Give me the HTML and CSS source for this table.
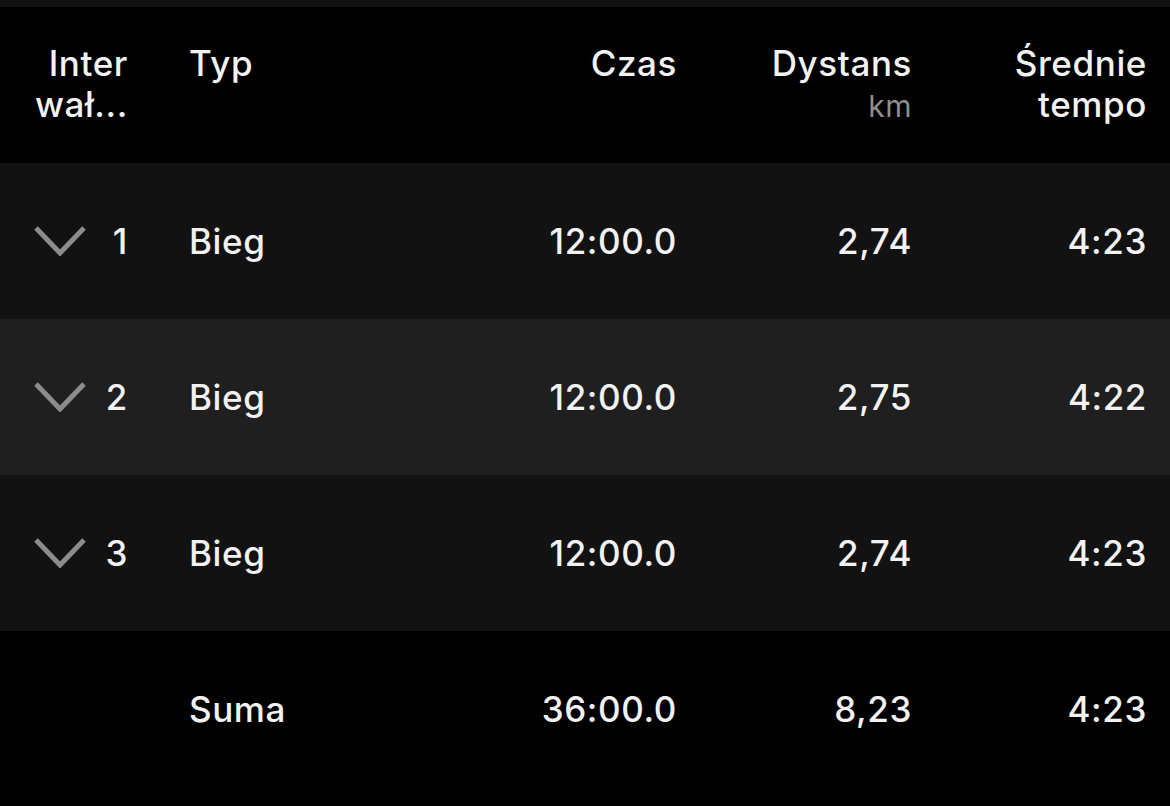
FILE: index.html
```html
<!DOCTYPE html>
<html lang="pl">
<head>
<meta charset="utf-8">
<link rel="stylesheet" href="styles.css">
</head>
<body>
<div class="topbar"></div>
<div class="table">
  <div class="row head">
    <div class="c1"><span class="hd">Inter<br>wał...</span></div>
    <div class="c2">Typ</div>
    <div class="c3">Czas</div>
    <div class="c4">Dystans<br><span class="unit">km</span></div>
    <div class="c5">Średnie<br>tempo</div>
  </div>
  <div class="row dark">
    <div class="c1"><svg class="chev" viewBox="0 0 52 30"><polyline points="2,2 26,27 50,2"/></svg><span>1</span></div>
    <div class="c2">Bieg</div>
    <div class="c3">12:00.0</div>
    <div class="c4">2,74</div>
    <div class="c5">4:23</div>
  </div>
  <div class="row mid">
    <div class="c1"><svg class="chev" viewBox="0 0 52 30"><polyline points="2,2 26,27 50,2"/></svg><span>2</span></div>
    <div class="c2">Bieg</div>
    <div class="c3">12:00.0</div>
    <div class="c4">2,75</div>
    <div class="c5">4:22</div>
  </div>
  <div class="row dark">
    <div class="c1"><svg class="chev" viewBox="0 0 52 30"><polyline points="2,2 26,27 50,2"/></svg><span>3</span></div>
    <div class="c2">Bieg</div>
    <div class="c3">12:00.0</div>
    <div class="c4">2,74</div>
    <div class="c5">4:23</div>
  </div>
  <div class="row total">
    <div class="c1"></div>
    <div class="c2">Suma</div>
    <div class="c3">36:00.0</div>
    <div class="c4">8,23</div>
    <div class="c5">4:23</div>
  </div>
</div>
</body>
</html>
```
FILE: styles.css
```css
html, body {
  margin: 0;
  padding: 0;
  background: #000;
}
body {
  width: 1170px;
  height: 806px;
  overflow: hidden;
  font-family: Inter, "Noto Sans", sans-serif;
  font-weight: 550;
  font-size: 35px;
  letter-spacing: 0.6px;
  color: #f2f2f2;
}
.topbar {
  height: 7px;
  background: #121212;
}
.row {
  display: grid;
  grid-template-columns: 128px 261px 288px 235px 235px;
  align-items: center;
  height: 156px;
  padding-right: 23px;
  line-height: 41px;
}
.head {
  background: #000;
  align-items: start;
  align-content: center;
}
.dark { background: #121212; }
.mid { background: #1f1f1f; }
.total { background: #000; padding-bottom: 19px; }
.c1 {
  display: flex;
  justify-content: space-between;
  align-items: center;
  padding-left: 34px;
  text-align: right;
}
.head .c1 { justify-content: flex-end; }
.c2 { padding-left: 61px; }
.c3, .c4, .c5 { text-align: right; }
.unit {
  color: #8e8e8e;
  font-weight: 400;
  font-size: 30px;
  letter-spacing: 0.5px;
}
.chev {
  width: 52px;
  height: 30px;
  fill: none;
  stroke: #8c8c8c;
  stroke-width: 5;
}
```
